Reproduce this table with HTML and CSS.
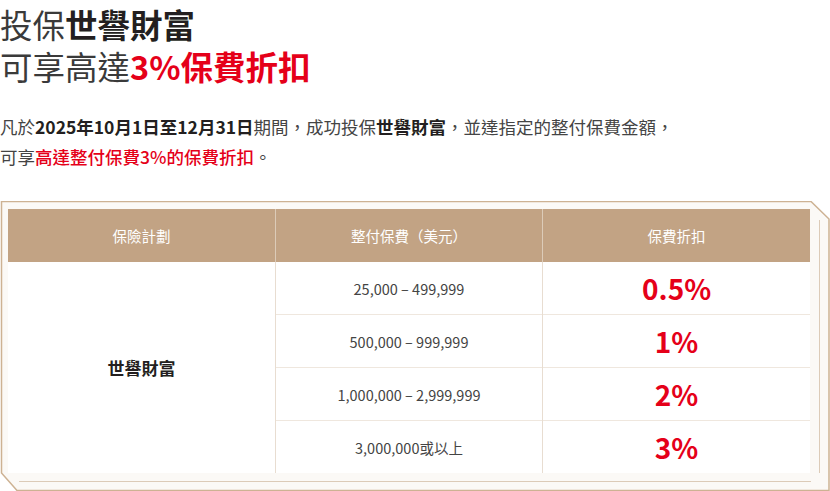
FILE: index.html
```html
<!DOCTYPE html>
<html lang="zh-Hant">
<head>
<meta charset="utf-8">
<link rel="stylesheet" href="styles.css">
</head>
<body>
<div class="page">
  <h1 class="title">
    <span class="t-line">投保<b>世譽財富</b></span>
    <span class="t-line">可享高達<b class="red">3%保費折扣</b></span>
  </h1>
  <p class="intro">凡於<b>2025年10月1日至12月31日</b>期間，成功投保<b>世譽財富</b>，並達指定的整付保費金額，<br>可享<span class="red">高達整付保費3%的保費折扣</span>。</p>
  <div class="frame">
    <svg class="frame-art" width="830" height="290" viewBox="0 0 830 290">
      <polygon points="1.5,0.5 811,0.5 829,18 829,289.5 17,289.5 1.5,272" fill="#fbf9f6" stroke="#cdb293" stroke-width="1.5"/>
      <line x1="819.5" y1="19" x2="819.5" y2="272" stroke="#dccbb8" stroke-width="1"/>
      <line x1="19" y1="280.5" x2="811" y2="280.5" stroke="#dccbb8" stroke-width="1"/>
    </svg>
    <table class="rates">
      <thead>
        <tr><th>保險計劃</th><th>整付保費（美元）</th><th>保費折扣</th></tr>
      </thead>
      <tbody>
        <tr><td class="plan" rowspan="4">世譽財富</td><td class="amt">25,000 – 499,999</td><td class="pct">0.5%</td></tr>
        <tr><td class="amt">500,000 – 999,999</td><td class="pct">1%</td></tr>
        <tr><td class="amt">1,000,000 – 2,999,999</td><td class="pct">2%</td></tr>
        <tr><td class="amt">3,000,000或以上</td><td class="pct">3%</td></tr>
      </tbody>
    </table>
  </div>
</div>
</body>
</html>
```

FILE: styles.css
```css
html, body {
  margin: 0;
  padding: 0;
  background: #ffffff;
}
body {
  font-family: "Noto Sans CJK TC", "Noto Sans", sans-serif;
  color: #333333;
}
.page {
  width: 830px;
}
.title {
  margin: 0;
  padding-top: 3px;
  font-size: 32.5px;
  font-weight: 400;
  line-height: 42px;
  color: #3a3a3a;
}
.t-line {
  display: block;
}
.title b {
  font-weight: 700;
  color: #231f20;
}
.title b.red,
.red {
  color: #e50019;
}
.intro {
  margin: 25px 0 0 0;
  font-size: 17.5px;
  line-height: 30px;
  color: #444444;
}
.intro b {
  font-weight: 700;
  color: #231f20;
}
.intro .red {
  font-weight: 500;
}
.frame {
  position: relative;
  margin-top: 29px;
  height: 290px;
  padding: 8px 0 0 8px;
  box-sizing: border-box;
}
.frame-art {
  position: absolute;
  left: 0;
  top: 0;
}
.rates {
  position: relative;
  width: 802px;
  border-collapse: collapse;
  table-layout: fixed;
  background: #ffffff;
}
.rates th {
  background: #c2a384;
  color: #ffffff;
  font-weight: 400;
  font-size: 14.5px;
  height: 53px;
  padding: 0;
  text-align: center;
  border-left: 1px solid #dccbb8;
}
.rates th:first-child {
  border-left: none;
}
.rates td {
  height: 52px;
  padding: 0;
  text-align: center;
  border-left: 1px solid #e8ddd1;
  border-top: 1px solid #efe7de;
}
.rates tbody tr:first-child td {
  border-top: none;
}
.rates td.plan {
  border-left: none;
  font-size: 17px;
  font-weight: 700;
  color: #231f20;
}
.rates td.amt {
  font-size: 14.5px;
  color: #444444;
}
.rates td.pct {
  font-size: 28px;
  font-weight: 700;
  color: #e50019;
}
```
